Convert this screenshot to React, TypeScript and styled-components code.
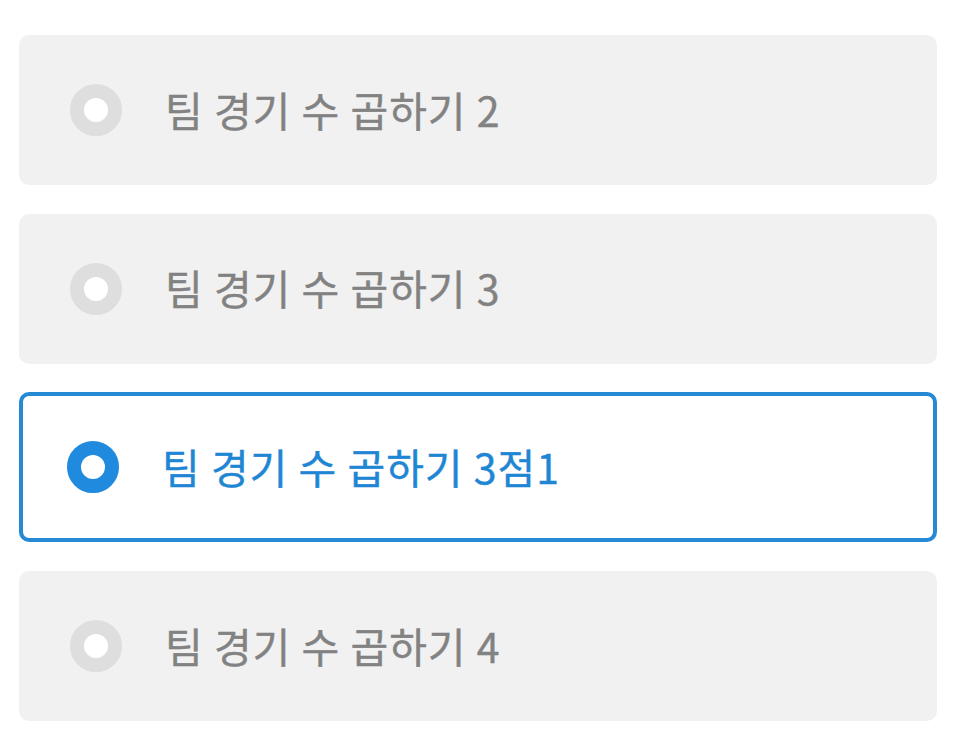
import React from 'react';
import styled, { createGlobalStyle } from 'styled-components';

const GlobalStyle = createGlobalStyle`
  html, body {
    margin: 0;
    padding: 0;
    background: #ffffff;
  }
  body {
    font-family: "Noto Sans CJK KR", "Noto Sans", sans-serif;
  }
`;

const List = styled.div`
  display: flex;
  flex-direction: column;
  gap: 28.7px;
  width: 918px;
  padding: 35px 0 0 19px;
`;

const Option = styled.div<{ $selected?: boolean }>`
  box-sizing: border-box;
  height: 150px;
  display: flex;
  align-items: center;
  gap: 43px;
  padding-left: ${(p) => (p.$selected ? '44px' : '51px')};
  border-radius: 10px;
  background: ${(p) => (p.$selected ? '#ffffff' : '#f1f1f1')};
  border: ${(p) => (p.$selected ? '4px solid #2589d3' : 'none')};
`;

const Radio = styled.span<{ $selected?: boolean }>`
  box-sizing: border-box;
  width: 52px;
  height: 52px;
  flex: none;
  border-radius: 50%;
  background: #ffffff;
  border: 14px solid ${(p) => (p.$selected ? '#1f8ade' : '#dedede')};
`;

const Label = styled.span<{ $selected?: boolean }>`
  font-size: 41px;
  font-weight: 400;
  line-height: 1;
  letter-spacing: 1px;
  margin-top: -2px;
  color: ${(p) => (p.$selected ? '#1f86d4' : '#828282')};
  -webkit-text-stroke: 0.4px currentColor;
`;

const options = [
  { label: '팀 경기 수 곱하기 2', selected: false },
  { label: '팀 경기 수 곱하기 3', selected: false },
  { label: '팀 경기 수 곱하기 3점1', selected: true },
  { label: '팀 경기 수 곱하기 4', selected: false },
];

const App: React.FC = () => {
  return (
    <>
      <GlobalStyle />
      <List>
        {options.map((o) => (
          <Option key={o.label} $selected={o.selected}>
            <Radio $selected={o.selected} />
            <Label $selected={o.selected}>{o.label}</Label>
          </Option>
        ))}
      </List>
    </>
  );
};

export default App;
